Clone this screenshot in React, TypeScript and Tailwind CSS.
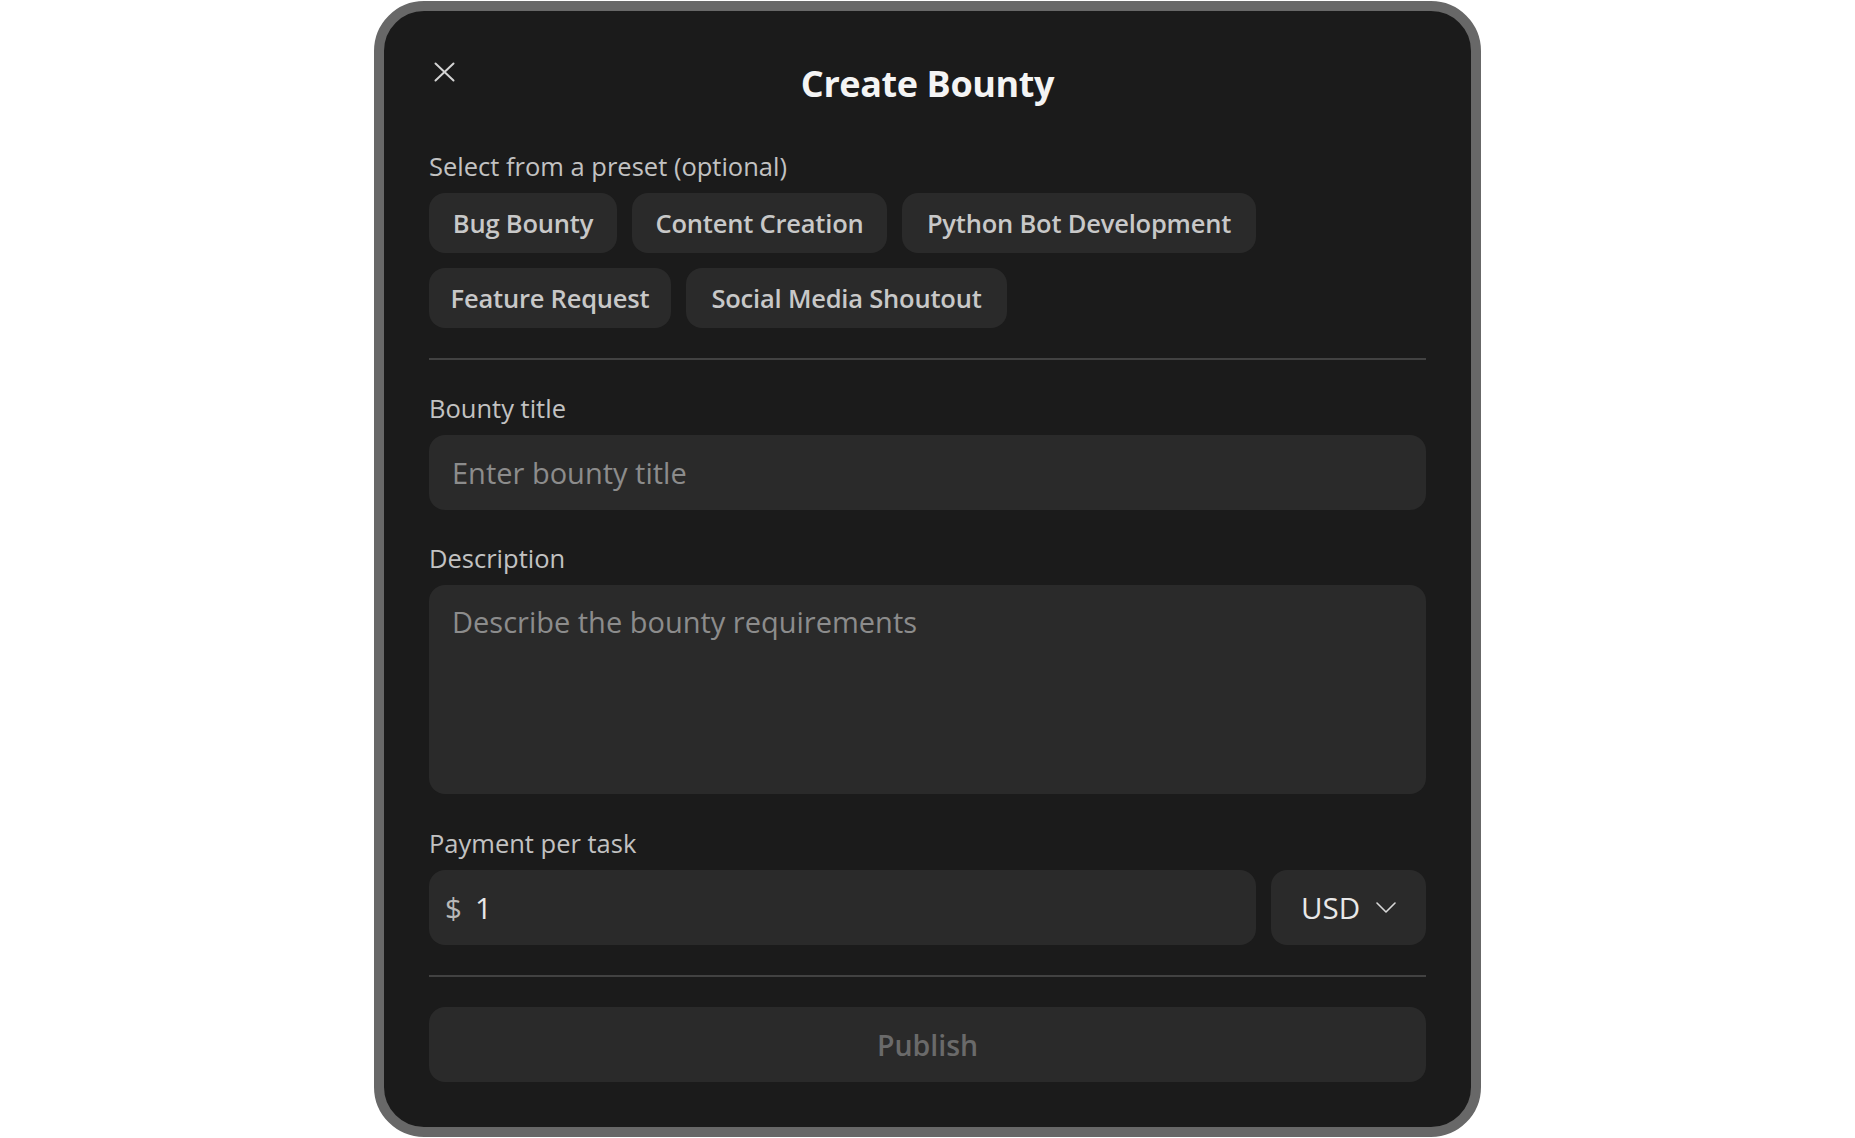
import React from "react";

const chipsRow1 = [
  { label: "Bug Bounty", w: "w-[188px]" },
  { label: "Content Creation", w: "w-[255px]" },
  { label: "Python Bot Development", w: "w-[354px]" },
];
const chipsRow2 = [
  { label: "Feature Request", w: "w-[242px]" },
  { label: "Social Media Shoutout", w: "w-[321px]" },
];

function Chip({ label, w }: { label: string; w: string }) {
  return (
    <button
      type="button"
      className={`${w} h-[60px] rounded-[16px] bg-[#2a2a2a] flex items-center justify-center text-[25.5px] leading-[34px] font-semibold text-[#c8c8c8] tracking-[-0.2px]`}
    >
      {label}
    </button>
  );
}

function Label({ children }: { children: React.ReactNode }) {
  return <div className="text-[25.5px] leading-[34px] text-[#c2c2c2]">{children}</div>;
}

export default function App() {
  return (
    <div
      className="min-h-screen bg-white flex justify-center pt-[1px]"
      style={{ fontFamily: '"Open Sans", "Noto Sans", sans-serif' }}
    >
      <div className="w-[1107px] h-[1136px] rounded-[50px] border-[10px] border-[#686868] bg-[#1b1b1b] px-[45px] pt-[49px] pb-[45px] flex flex-col">
        <div className="relative h-[48px] flex justify-center">
          <button type="button" className="absolute left-[5px] top-[2px] w-[21px] h-[20px] text-[#d4d4d4]">
            <svg width="21" height="20" viewBox="0 0 21 20" fill="none" stroke="currentColor" strokeWidth="2" strokeLinecap="round">
              <path d="M1.5 1.5 L19.5 18.5" />
              <path d="M19.5 1.5 L1.5 18.5" />
            </svg>
          </button>
          <h1 className="text-[36px] leading-[48px] font-bold tracking-[-0.4px] text-[#f4f4f4]">Create Bounty</h1>
        </div>

        <div className="mt-[41px]">
          <Label>Select from a preset (optional)</Label>
        </div>
        <div className="mt-[10px] flex flex-col gap-[15px]">
          <div className="flex gap-[15px]">
            {chipsRow1.map((c) => (
              <Chip key={c.label} {...c} />
            ))}
          </div>
          <div className="flex gap-[15px]">
            {chipsRow2.map((c) => (
              <Chip key={c.label} {...c} />
            ))}
          </div>
        </div>

        <div className="mt-[30px] h-[2px] bg-[#424242]" />

        <div className="mt-[31px]">
          <Label>Bounty title</Label>
        </div>
        <input
          className="mt-[10px] h-[75px] w-full rounded-[16px] bg-[#2a2a2a] px-[23px] text-[29px] leading-[40px] text-[#e6e6e6] placeholder:text-[#8c8c8c] outline-none"
          placeholder="Enter bounty title"
        />

        <div className="mt-[31px]">
          <Label>Description</Label>
        </div>
        <textarea
          className="mt-[10px] h-[209px] w-full resize-none rounded-[16px] bg-[#2a2a2a] px-[23px] pt-[17px] text-[29px] leading-[40px] text-[#e6e6e6] placeholder:text-[#8c8c8c] outline-none"
          placeholder="Describe the bounty requirements"
        />

        <div className="mt-[32px]">
          <Label>Payment per task</Label>
        </div>
        <div className="mt-[10px] flex gap-[15px] h-[75px]">
          <div className="flex-1 rounded-[16px] bg-[#2a2a2a] flex items-center px-[16px]">
            <span className="text-[29.5px] leading-[40px] text-[#b8b8b8]">$</span>
            <input
              className="ml-[13px] flex-1 bg-transparent text-[29.5px] leading-[40px] text-[#e8e8e8] outline-none"
              defaultValue="1"
            />
          </div>
          <button
            type="button"
            className="w-[155px] rounded-[16px] bg-[#2a2a2a] flex items-center justify-center gap-[16px]"
          >
            <span className="text-[29.5px] leading-[40px] text-[#e8e8e8]">USD</span>
            <svg width="20" height="11" viewBox="0 0 20 11" fill="none" stroke="#d8d8d8" strokeWidth="1.6" strokeLinecap="round" strokeLinejoin="round">
              <path d="M1 1 L10 10 L19 1" />
            </svg>
          </button>
        </div>

        <div className="mt-[30px] h-[2px] bg-[#424242]" />

        <button
          type="button"
          className="mt-[30px] h-[75px] w-full rounded-[16px] bg-[#2a2a2a] flex items-center justify-center text-[28.5px] leading-[40px] font-semibold text-[#6a6a6a]"
        >
          Publish
        </button>
      </div>
    </div>
  );
}
